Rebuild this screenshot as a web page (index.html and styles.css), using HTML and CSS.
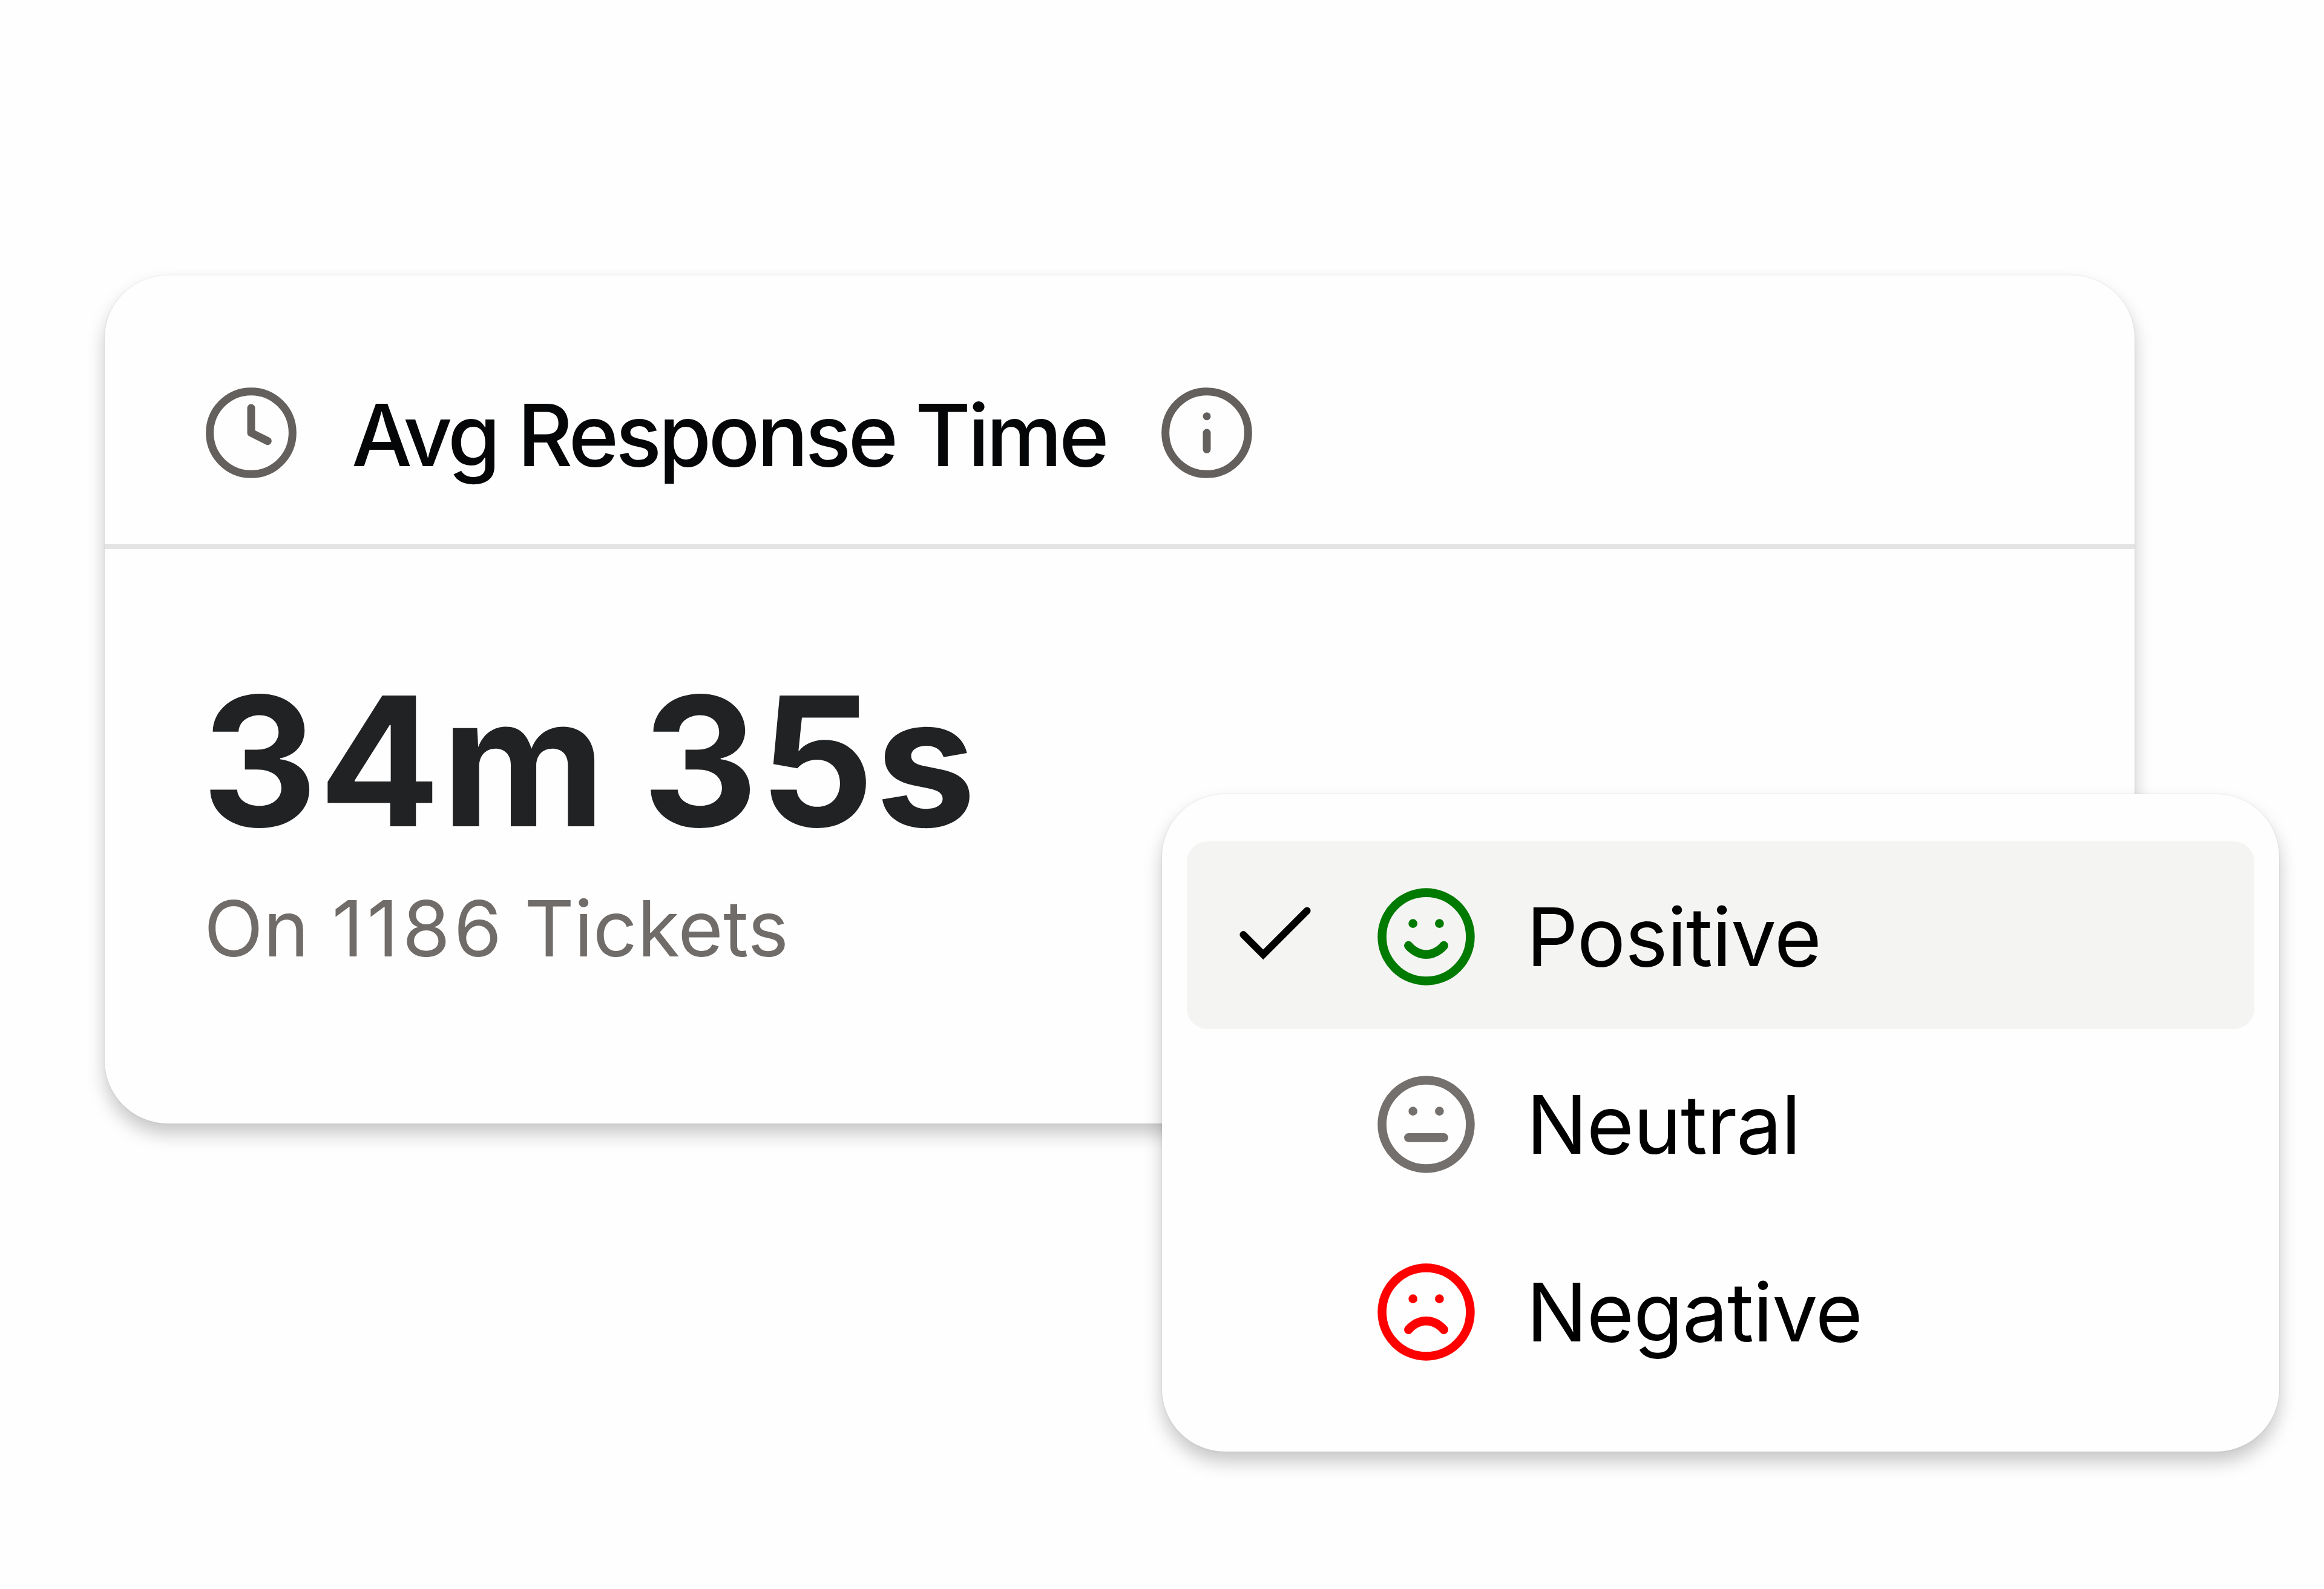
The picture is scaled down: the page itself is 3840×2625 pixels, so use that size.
FILE: index.html
```
<!DOCTYPE html>
<html lang="en"><head><meta charset="UTF-8"/>
<meta name="viewport" content="width=device-width, initial-scale=1" />
<title>Avg Response Time</title>
<link rel="stylesheet" href="styles.css"></head><body>

<!-- metric card -->
<section class="card">
  <header class="card-head">
    <svg class="icon" viewBox="0 0 24 24"><circle cx="12" cy="12" r="10"/><path d="M12 6v6l4 2"/></svg>
    <h2 class="title">Avg Response Time</h2>
    <svg class="icon" viewBox="0 0 24 24"><circle cx="12" cy="12" r="10"/><path d="M12 16v-4M12 8h.01"/></svg>
  </header>
  <div class="card-body">
    <div class="value">34m 35s</div>
    <div class="sub">On <span class="num">1186</span> Tickets</div>
  </div>

  <!-- sentiment dropdown, overlaps the card corner -->
  <ul class="menu">
    <li class="item active">
      <svg class="check" viewBox="0 0 24 24"><path d="M20 6 9 17l-5-5"/></svg>
      <svg class="face positive" viewBox="0 0 24 24"><circle cx="12" cy="12" r="10"/><path d="M8 14s1.5 2 4 2 4-2 4-2M9 9h.01M15 9h.01"/></svg>
      <span class="label">Positive</span>
    </li>
    <li class="item">
      <span class="check"></span>
      <svg class="face neutral" viewBox="0 0 24 24"><circle cx="12" cy="12" r="10"/><path d="M8 15h8M9 9h.01M15 9h.01"/></svg>
      <span class="label">Neutral</span>
    </li>
    <li class="item">
      <span class="check"></span>
      <svg class="face negative" viewBox="0 0 24 24"><circle cx="12" cy="12" r="10"/><path d="M16 16s-1.5-2-4-2-4 2-4 2M9 9h.01M15 9h.01"/></svg>
      <span class="label">Negative</span>
    </li>
  </ul>
</section>

</body></html>
```
FILE: styles.css
```
/* reset & variables */
*{box-sizing:border-box;margin:0;padding:0}
:root{--bg:#fefefe;--line:#e4e4e4;--hover:#f4f4f2;--muted:#706c69;--icon:#64605d;
      --shadow:0 0 3px rgba(0,0,0,.1),0 17px 30px rgba(0,0,0,.22)}
body{font-family:Inter,sans-serif;background:var(--bg);color:#050607;
     height:100vh;padding:455px 0 0 173px;overflow:hidden}
svg{fill:none;stroke:currentColor;stroke-width:2;stroke-linecap:round;stroke-linejoin:round;flex:none}

/* card */
.card{position:relative;width:3354px;height:1401px;border-radius:104px;
      background:var(--bg);box-shadow:var(--shadow)}
.card-head{display:flex;align-items:center;height:452px;padding:178px 160px 102px;
           border-bottom:8px solid var(--line)}
.icon{width:164px;height:164px;color:var(--icon);stroke-width:1.9}
.title{margin:0 84px 0 84px;padding-top:7px;font-size:141px;line-height:164px;font-weight:500;
       letter-spacing:-4.95px;white-space:nowrap}
.card-body{padding:202px 160px 0}
.value{font-size:297px;line-height:297px;font-weight:650;letter-spacing:2px;word-spacing:-14px;color:#202224}
.sub{margin:64px 0 0 4px;font-size:128px;line-height:128px;color:var(--muted)}
.num{margin:0 -5px 0 2px;letter-spacing:6px}

/* dropdown */
.menu{position:absolute;left:1747px;top:857px;width:1846px;height:1086px;padding:78px 41px;
      border-radius:104px;background:var(--bg);box-shadow:var(--shadow);list-style:none}
.item{display:flex;align-items:center;height:310px;padding:4px 68px 0;border-radius:34px}
.item.active{background:var(--hover)}
.check{width:158px;height:158px;margin:0 83px 6px -1px;flex:none;color:#000;
       stroke-width:1.8;stroke-linejoin:miter}
.face{width:175px;height:175px;margin-right:78px}
.face.positive{color:#007a00}
.face.neutral{color:#74706d}
.face.negative{color:#f00}
.label{font-size:134px;line-height:160px;letter-spacing:-1.1px;color:#000}
```
